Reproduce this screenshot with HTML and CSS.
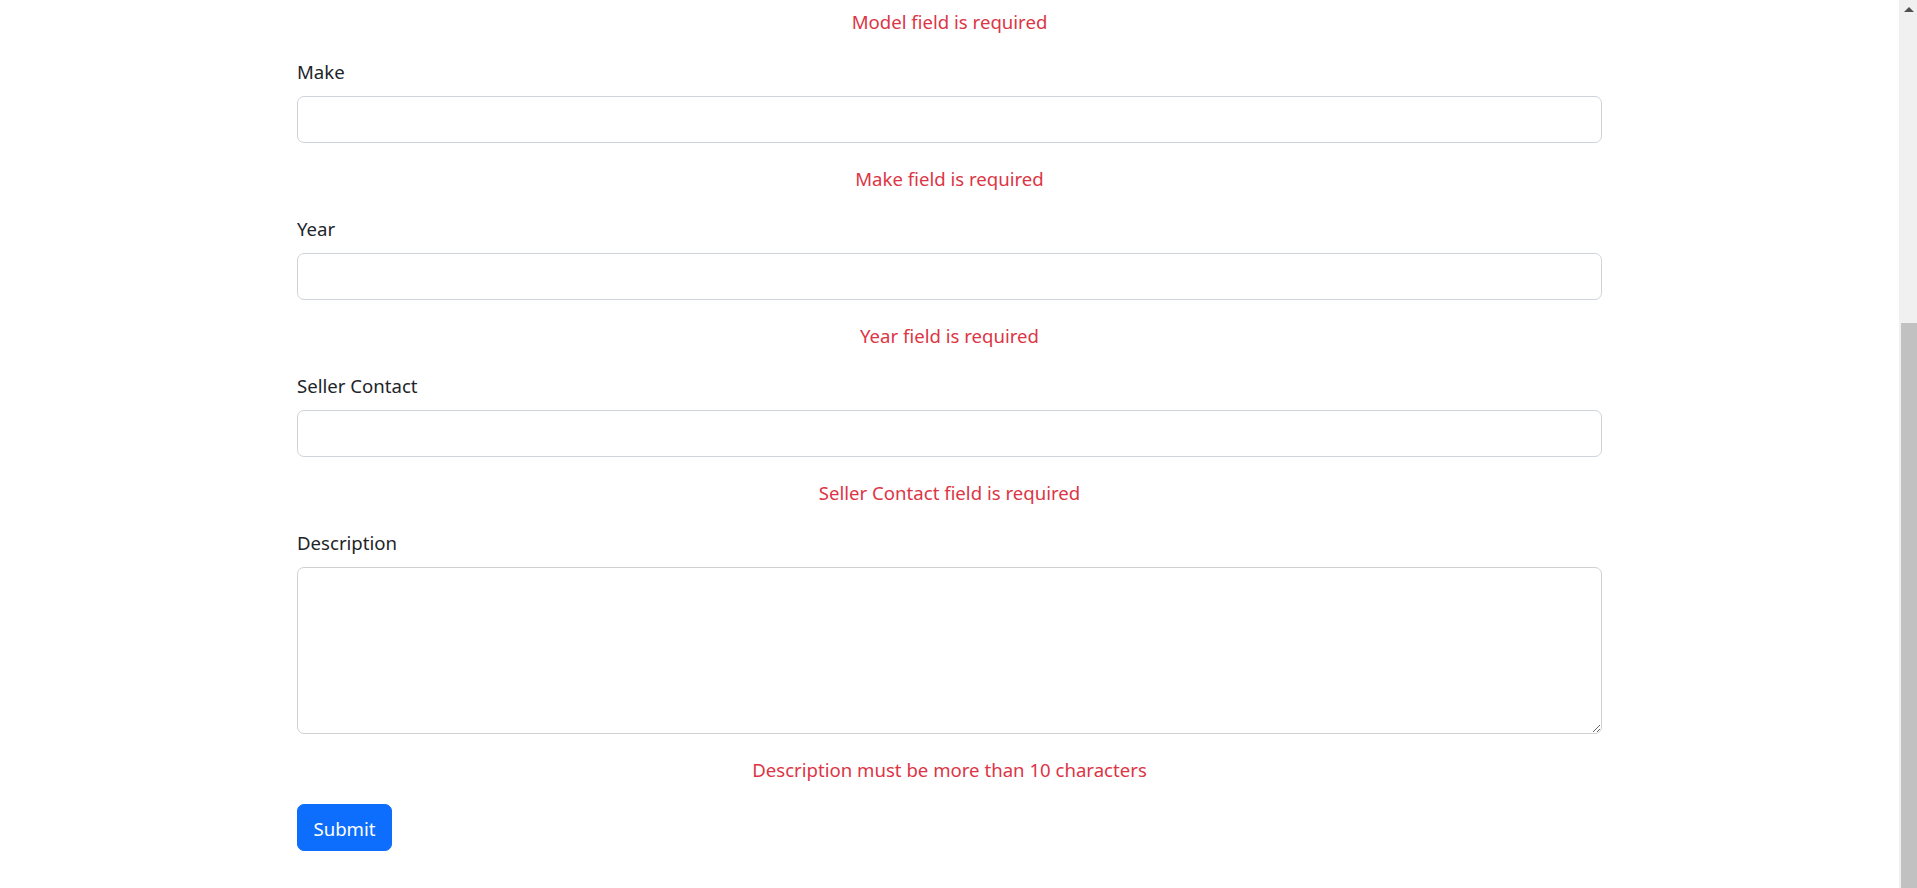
FILE: index.html
```html
<!DOCTYPE html>
<html lang="en">
<head>
<meta charset="utf-8">
<title>Add Car</title>
<link rel="stylesheet" href="styles.css">
</head>
<body>
<main class="page">
  <form class="car-form">
    <p class="error error-first">Model field is required</p>

    <div class="field">
      <label class="label" for="make">Make</label>
      <input class="control" id="make" type="text">
      <p class="error">Make field is required</p>
    </div>

    <div class="field">
      <label class="label" for="year">Year</label>
      <input class="control" id="year" type="text">
      <p class="error">Year field is required</p>
    </div>

    <div class="field">
      <label class="label" for="seller">Seller Contact</label>
      <input class="control" id="seller" type="text">
      <p class="error">Seller Contact field is required</p>
    </div>

    <div class="field">
      <label class="label" for="desc">Description</label>
      <textarea class="control textarea" id="desc"></textarea>
      <p class="error">Description must be more than 10 characters</p>
    </div>

    <button class="submit" type="button">Submit</button>
  </form>
</main>
<div class="scrollbar" aria-hidden="true">
  <span class="scroll-arrow"></span>
  <span class="scroll-thumb"></span>
</div>
</body>
</html>
```

FILE: styles.css
```css
html, body {
  margin: 0;
  padding: 0;
  background: #ffffff;
  overflow: hidden;
}

body {
  font-family: "Noto Sans", "Open Sans", "Liberation Sans", sans-serif;
  font-size: 18.6px;
  line-height: 30px;
  color: #212529;
  height: 888px;
}

.page {
  width: calc(100% - 18px);
}

.car-form {
  max-width: 1305px;
  margin: 0 auto;
  padding-top: 6px;
  display: flex;
  flex-direction: column;
}

.field {
  display: flex;
  flex-direction: column;
}

.label {
  display: block;
  line-height: 28px;
  padding-top: 2px;
  margin-bottom: 10px;
}

.control {
  box-sizing: border-box;
  display: block;
  width: 100%;
  height: 47px;
  margin: 0;
  padding: 7px 15px;
  font: inherit;
  color: #212529;
  background: #ffffff;
  border: 1px solid #ced4da;
  border-radius: 7px;
  outline: none;
}

.textarea {
  height: 167px;
  border-color: #d0d1d4;
  resize: vertical;
}

.error {
  margin: 20px 0;
  line-height: 28px;
  padding-top: 2px;
  text-align: center;
  color: #dc3545;
}

.error-first {
  margin-top: 0;
}

.submit {
  align-self: flex-start;
  box-sizing: border-box;
  width: 95px;
  height: 47px;
  margin: 0;
  padding: 2px 0 0;
  font: inherit;
  line-height: 28px;
  color: #ffffff;
  background: #0d6efd;
  border: 1px solid #0d6efd;
  border-radius: 7px;
  cursor: pointer;
}

.scrollbar {
  position: fixed;
  top: 0;
  right: 0;
  width: 18px;
  height: 100%;
  background: #f0f0f0;
}

.scroll-arrow {
  position: absolute;
  top: 7px;
  left: 5px;
  width: 0;
  height: 0;
  border-left: 5px solid transparent;
  border-right: 5px solid transparent;
  border-bottom: 5px solid #505050;
}

.scroll-thumb {
  position: absolute;
  top: 323px;
  left: 2px;
  right: 0;
  bottom: 0;
  background: #c1c1c1;
}
```
